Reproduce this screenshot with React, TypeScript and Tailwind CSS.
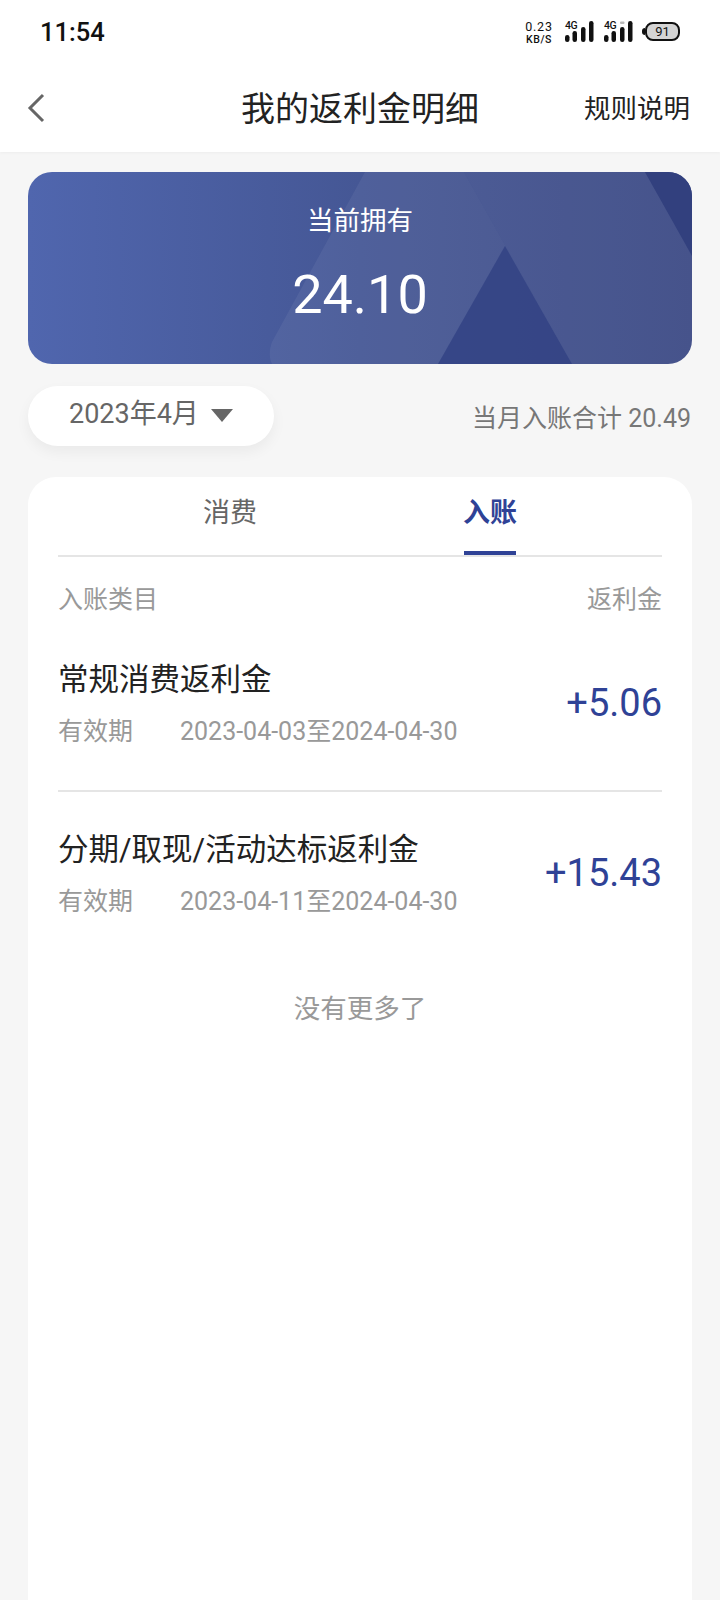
import React from 'react';

const FONT = 'font-["Roboto","Noto_Sans_CJK_SC",sans-serif]';

function Signal({ dim }: { dim?: boolean }) {
    return (
        <div className="relative w-[29px] h-[22px]">
            <span className="absolute left-0 top-0 text-[10.5px] leading-[10px] font-medium text-[#111] tracking-[-0.5px]">4G</span>
            <svg width="29" height="22" viewBox="0 0 29 22" className="absolute left-0 top-0">
                <rect x="0" y="14" width="4.5" height="7" rx="2.2" fill="#111" />
                <rect x="7.5" y="10" width="4.5" height="11" rx="2.2" fill="#111" />
                <rect x="16" y="6" width="4.5" height="15" rx="2.2" fill="#111" />
                <rect x="24" y="0" width="4.5" height="21" rx="2.2" fill="#111" />
                {dim && <rect x="16" y="0.5" width="4.5" height="2.5" rx="1" fill="#bbb" />}
            </svg>
        </div>
    );
}

function StatusBar() {
    return (
        <div className="h-[62px] flex justify-between items-start px-[40px]">
            <span className="mt-[15px] text-[25.5px] leading-[34px] font-medium text-[#111]">11:54</span>
            <div className="flex items-start mt-[21px]">
                <div className="flex flex-col items-center w-[28px] mt-[-2px] mr-[12px] text-[#111] whitespace-nowrap">
                    <span className="text-[12.5px] leading-[15px] tracking-[0.8px]">0.23</span>
                    <span className="text-[10.5px] leading-[12px] font-medium tracking-[0.6px]">KB/S</span>
                </div>
                <div className="mr-[10px]"><Signal /></div>
                <div className="mr-[12px]"><Signal dim /></div>
                <div className="relative mt-[1px] w-[35px] h-[19px] rounded-[8px] border-2 border-[#111] bg-[#d4d4d4] flex items-center justify-center">
                    <span className="absolute left-[-5px] top-[4px] w-[3px] h-[7px] bg-[#111] rounded-l-sm" />
                    <span className="text-[13px] leading-none text-[#111]">91</span>
                </div>
            </div>
        </div>
    );
}

function NavBar() {
    return (
        <div className="relative h-[90px] flex items-center justify-center">
            <svg width="20" height="30" viewBox="0 0 20 30" className="absolute left-[26px] top-[31px]">
                <path d="M17 2 L4 15 L17 28" fill="none" stroke="#666" strokeWidth="3" />
            </svg>
            <h1 className="mt-[3px] text-[34px] leading-[44px] text-[#222] font-normal">我的返利金明细</h1>
            <span className="absolute right-[30px] top-[30px] text-[26.5px] leading-[34px] text-[#222]">规则说明</span>
        </div>
    );
}

function BalanceCard() {
    return (
        <div className="relative h-[192px] rounded-[24px] overflow-hidden bg-gradient-to-r from-[#5066ae] via-[#455795] to-[#3d4a85] flex flex-col items-center">
            <svg width="664" height="192" viewBox="0 0 664 192" className="absolute left-0 top-0">
                <path d="M337 0 L436 0 L544 192 L244 192 C241 186 241 178 244 170 Z" fill="#ffffff" fillOpacity="0.06" />
                <path d="M477 74 L544 192 L410 192 Z" fill="#2f3f82" fillOpacity="0.75" />
                <path d="M436 0 L617 0 L664 82 L664 192 L544 192 Z" fill="#ffffff" fillOpacity="0.05" />
                <path d="M617 0 L664 0 L664 84 Z" fill="#32407e" />
            </svg>
            <span className="relative mt-[32px] text-[26.5px] leading-[34px] text-white">当前拥有</span>
            <span className="relative mt-[25px] text-[54px] leading-[64px] text-white">24.10</span>
        </div>
    );
}

function MonthRow() {
    return (
        <div className="flex justify-between mt-[22px]">
            <div className="w-[246px] h-[60px] rounded-full bg-white shadow-[0_6px_14px_rgba(0,0,0,0.05)] flex items-center pl-[41px]">
                <span className="mt-[-4px] text-[27px] leading-[34px] text-[#666]">2023年4月</span>
                <span className="ml-[12px] mt-[-2px] w-0 h-0 border-l-[11px] border-r-[11px] border-t-[13px] border-l-transparent border-r-transparent border-t-[#666]" />
            </div>
            <span className="mt-[17px] mr-[1px] text-[25px] leading-[32px] text-[#777]">当月入账合计 20.49</span>
        </div>
    );
}

function Row({ title, from, amount }: { title: string; from: string; amount: string }) {
    return (
        <div className="flex justify-between items-center">
            <div>
                <div className="text-[30.5px] leading-[40px] text-[#222]">{title}</div>
                <div className="flex mt-[16px] text-[25px] leading-[32px] text-[#999]">
                    <span className="w-[122px]">有效期</span>
                    <span>{from}至2024-04-30</span>
                </div>
            </div>
            <span className="mt-[-2px] text-[38px] leading-[48px] text-[#2f4296]">{amount}</span>
        </div>
    );
}

function DetailCard() {
    return (
        <div className="mt-[31px] flex-1 rounded-t-[28px] bg-white px-[30px]">
            <div className="h-[80px] flex justify-center gap-[208px] border-b-2 border-[#e5e5e5]">
                <div className="w-[52px] pt-[18px] text-[27px] leading-[36px] text-[#666] whitespace-nowrap flex justify-center">消费</div>
                <div className="relative w-[52px] pt-[18px] text-[27px] leading-[36px] font-bold text-[#2f4296] whitespace-nowrap flex justify-center">
                    入账
                    <span className="absolute left-0 right-0 bottom-0 h-1 bg-[#2f4296]" />
                </div>
            </div>
            <div className="flex justify-between mt-[27px] text-[25px] leading-[32px] text-[#999]">
                <span>入账类目</span>
                <span>返利金</span>
            </div>
            <div className="mt-[44px]"><Row title="常规消费返利金" from="2023-04-03" amount="+5.06" /></div>
            <div className="h-0.5 bg-[#e5e5e5] mt-[42px]" />
            <div className="mt-[38px]"><Row title="分期/取现/活动达标返利金" from="2023-04-11" amount="+15.43" /></div>
            <div className="mt-[73px] text-[26.5px] leading-[36px] text-center text-[#999]">没有更多了</div>
        </div>
    );
}

export default function App() {
    return (
        <div className={`${FONT} w-[720px] h-[1600px] overflow-hidden bg-[#f6f6f6] flex flex-col`}>
            <div className="h-[152px] bg-white shadow-[0_1px_3px_rgba(0,0,0,0.04)]">
                <StatusBar />
                <NavBar />
            </div>
            <div className="flex-1 flex flex-col px-[28px] pt-[20px]">
                <BalanceCard />
                <MonthRow />
                <DetailCard />
            </div>
        </div>
    );
}
